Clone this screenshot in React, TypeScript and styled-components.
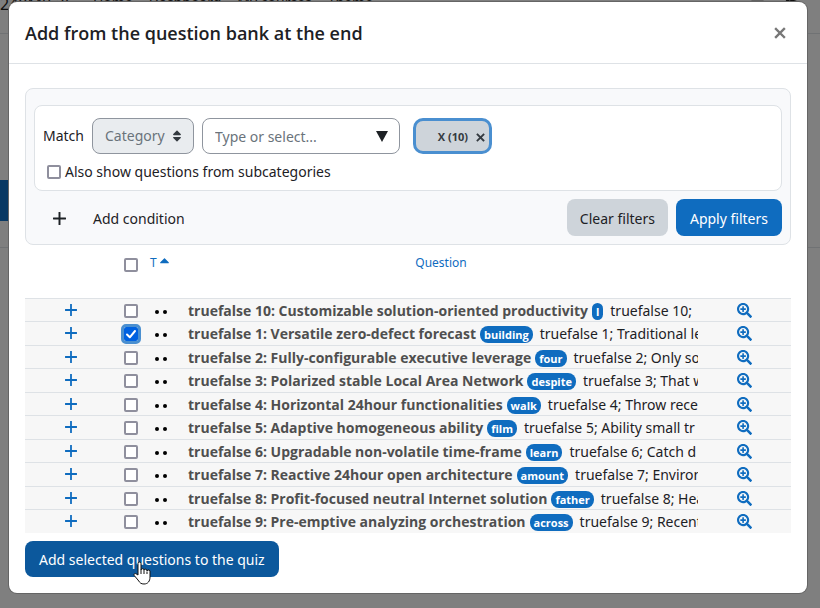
import React, { useState } from "react";
import styled, { createGlobalStyle } from "styled-components";
import { FaSearchPlus, FaSort, FaCaretUp, FaBell, FaComment } from "react-icons/fa";

const GlobalStyle = createGlobalStyle`
  *, *::before, *::after { box-sizing: border-box; }
  html, body, #root { height: 100%; }
  body {
    margin: 0;
    overflow: hidden;
    background: #7f7f7f;
    color: #1d2125;
    font-family: "Noto Sans", "Open Sans", sans-serif;
    font-size: 14px;
    line-height: 20px;
  }
  button, input, select { font: inherit; color: inherit; }
`;

const Page = styled.div`
  position: relative;
  min-height: 100vh;
  overflow: hidden;
`;

const SiteNav = styled.nav`
  display: flex;
  gap: 16px;
  height: 34px;
  padding-right: 20px;
  border-bottom: 1px solid #707274;
  color: #111;
  line-height: 6px;
  svg { width: 15px; height: 15px; margin-top: -12px; }
`;

const Brand = styled.a`
  width: 77px;
  color: inherit;
  font-size: 16px;
  line-height: 8px;
  text-decoration: none;
`;

const NavLink = styled.a`
  color: inherit;
  text-decoration: none;
`;

const NavIcons = styled.div`
  display: flex;
  gap: 20px;
  margin-left: auto;
`;

const SiteAction = styled.div`
  width: 40px;
  height: 41px;
  margin-top: 146px;
  background: #083863;
`;

const SiteRule = styled.hr`
  margin: 26px 0 0;
  border: 0;
  border-top: 1px solid #707274;
`;

const Overlay = styled.div`
  position: absolute;
  inset: 0;
  padding: 2px 13px 15px 9px;
`;

const Dialog = styled.section`
  display: flex;
  flex-direction: column;
  height: 100%;
  background: #fff;
  border-radius: 8px;
  box-shadow: 0 0 0 1px #656565;
`;

const DialogHeader = styled.header`
  display: flex;
  align-items: center;
  justify-content: space-between;
  height: 62px;
  padding: 0 21px 0 16px;
  border-bottom: 1px solid #dee2e6;
`;

const Title = styled.h1`
  margin: 0;
  font-family: "Open Sans", sans-serif;
  font-size: 18px;
  font-weight: 650;
  line-height: 28px;
`;

const IconButton = styled.button`
  display: inline-flex;
  align-items: center;
  justify-content: center;
  padding: 0;
  border: 0;
  background: none;
  color: ${(p) => p.color || "#1d2125"};
`;

const DialogBody = styled.div`
  flex: 1;
  padding: 24px 16px 16px;
`;

const FilterPanel = styled.form`
  padding: 16px 8px 8px;
  border: 1px solid #dee2e6;
  border-radius: 8px;
  background: #f8f9fb;
`;

const Condition = styled.div`
  padding: 12px 8px 8px;
  border: 1px solid #dee2e6;
  border-radius: 8px;
  background: #fff;
`;

const ConditionRow = styled.div`
  display: flex;
  align-items: center;
  gap: 8px;
`;

const Field = styled.div<{ $width: number }>`
  display: grid;
  align-items: center;
  width: ${(p) => p.$width}px;
  > * { grid-area: 1 / 1; }
  > svg { justify-self: end; margin-right: 10px; }
  > button { justify-self: end; margin-right: 12px; }
`;

const control = `
  width: 100%;
  height: 36px;
  padding: 0 12px;
  border: 1px solid #8f959e;
  border-radius: 8px;
`;

const Select = styled.select`
  ${control}
  appearance: none;
  background: #e9ecef;
  color: #6a737b;
  opacity: 1;
`;

const TextInput = styled.input`
  ${control}
  background: #fff;
  &::placeholder { color: #6a737b; opacity: 1; }
`;

const Chip = styled.span`
  display: inline-flex;
  align-items: center;
  justify-content: flex-end;
  gap: 8px;
  width: 79px;
  height: 36px;
  margin-left: 5px;
  padding: 2px 4px 0 0;
  border: 3px solid #4a8fd0;
  border-radius: 10px;
  background: #ced4da;
  color: #343a40;
  font-family: "Open Sans", sans-serif;
  font-size: 11px;
  font-weight: 700;
`;

const CheckLabel = styled.label`
  display: flex;
  align-items: center;
  gap: 4px;
  margin-top: 8px;
  padding-left: 4px;
`;

const Checkbox = styled.input`
  display: block;
  appearance: none;
  width: 14px;
  height: 14px;
  margin: 0;
  border: 2px solid #8f8f9d;
  border-radius: 2px;
  background: #fff;
  &:checked {
    border: 0;
    background: #0061e0 url("data:image/svg+xml,%3Csvg xmlns='http://www.w3.org/2000/svg' viewBox='0 0 14 14'%3E%3Cpath d='M3 7.5l2.8 2.8L11 4' fill='none' stroke='white' stroke-width='2' stroke-linecap='round' stroke-linejoin='round'/%3E%3C/svg%3E");
    outline: 3px solid #4a8fd0;
  }
`;

const PanelFooter = styled.div`
  display: flex;
  align-items: center;
  gap: 8px;
  margin-top: 8px;
`;

const AddCondition = styled.button`
  display: flex;
  align-items: center;
  gap: 27px;
  margin-right: auto;
  padding: 2px 0 0 19px;
  border: 0;
  background: none;
`;

const Button = styled.button<{ $tone: "grey" | "blue" | "dark" }>`
  height: ${(p) => (p.$tone === "dark" ? 36 : 37)}px;
  padding: 2px ${(p) => (p.$tone === "grey" ? 13 : 14)}px 0;
  border: 0;
  border-radius: 8px;
  background: ${(p) => ({ grey: "#ced4da", blue: "#0f6cbf", dark: "#0c589c" })[p.$tone]};
  color: ${(p) => (p.$tone === "grey" ? "#1d2125" : "#fff")};
`;

const Table = styled.table`
  width: 100%;
  table-layout: fixed;
  border-collapse: separate;
  border-spacing: 0;
  th, td { padding: 0; }
`;

const Column = styled.col<{ $width?: number }>`
  width: ${(p) => (p.$width ? `${p.$width}px` : "auto")};
`;

const HeadCell = styled.th`
  height: 53px;
  border-top: 8px solid transparent;
  vertical-align: top;
  font-size: 12px;
  font-weight: 400;
`;

const SortLink = styled.a`
  display: inline-flex;
  color: #0f6cbf;
  text-decoration: none;
`;

const TypeHeading = styled.div`
  padding-left: 5px;
  text-align: left;
`;

const Row = styled.tr`
  background: #f7f7f7;
  td { height: 24px; border-top: 1px solid #dee2e6; vertical-align: top; }
  &:nth-child(odd) td { height: 23px; }
`;

const Centered = styled.div`
  display: flex;
  justify-content: center;
  align-items: center;
  height: 22px;
  padding-top: 2px;
`;

const PlusCell = styled(Centered)`
  padding-top: 0;
`;

const HeadCentered = styled(PlusCell)`
  height: 24px;
`;

const TypeCell = styled(Centered)`
  justify-content: flex-start;
  padding-left: 10px;
`;

const QuestionText = styled.div`
  display: flex;
  align-items: center;
  height: 22px;
  padding: 2px 0 0 4px;
  overflow: hidden;
  white-space: nowrap;
`;

const Name = styled.strong`
  color: #4f4f4f;
  font-family: "Open Sans", sans-serif;
  font-weight: 700;
`;

const Tag = styled.span`
  flex: none;
  height: 17px;
  margin: 0 7px 0 4px;
  padding: 0 4px;
  border-radius: 8px;
  background: #0f6cbf;
  color: #fff;
  font-family: "Open Sans", sans-serif;
  font-size: 11px;
  font-weight: 700;
  line-height: 17px;
`;

const SubmitBar = styled.div`
  display: flex;
  margin-top: 8px;
`;

const Pointer = styled.svg`
  position: absolute;
  left: 133px;
  top: 561px;
`;

const Plus = ({ size }: { size: number }) => (
  <svg width={size} height={size} viewBox="0 0 12 12" aria-hidden="true">
    <path d="M6 0.500v11M0.500 6h11" stroke="currentColor" strokeWidth="1.800" strokeLinecap="round" />
  </svg>
);

const Cross = ({ size }: { size: number }) => (
  <svg width={size} height={size} viewBox="0 0 12 12" aria-hidden="true">
    <path d="M2 2l8 8M10 2l-8 8" stroke="currentColor" strokeWidth="2.400" strokeLinecap="square" />
  </svg>
);

const questions = [
  { name: "truefalse 10: Customizable solution-oriented productivity", tag: "l", text: "truefalse 10;" },
  { name: "truefalse 1: Versatile zero-defect forecast", tag: "building", text: "truefalse 1; Traditional le" },
  { name: "truefalse 2: Fully-configurable executive leverage", tag: "four", text: "truefalse 2; Only so" },
  { name: "truefalse 3: Polarized stable Local Area Network", tag: "despite", text: "truefalse 3; That w" },
  { name: "truefalse 4: Horizontal 24hour functionalities", tag: "walk", text: "truefalse 4; Throw rece" },
  { name: "truefalse 5: Adaptive homogeneous ability", tag: "film", text: "truefalse 5; Ability small tr" },
  { name: "truefalse 6: Upgradable non-volatile time-frame", tag: "learn", text: "truefalse 6; Catch d" },
  { name: "truefalse 7: Reactive 24hour open architecture", tag: "amount", text: "truefalse 7; Environ" },
  { name: "truefalse 8: Profit-focused neutral Internet solution", tag: "father", text: "truefalse 8; Hea" },
  { name: "truefalse 9: Pre-emptive analyzing orchestration", tag: "across", text: "truefalse 9; Recent" },
];

export default function App() {
  const [selected, setSelected] = useState<number[]>([1]);
  const toggle = (i: number) =>
    setSelected((s) => (s.includes(i) ? s.filter((n) => n !== i) : [...s, i]));
  const all = selected.length === questions.length;

  return (
    <Page>
      <GlobalStyle />
      <SiteNav>
        <Brand href="#">240M8.2)</Brand>
        {["Home", "Dashboard", "My courses", "Theme"].map((label) => (
          <NavLink key={label} href="#">{label}</NavLink>
        ))}
        <NavIcons><FaBell /><FaComment /></NavIcons>
      </SiteNav>
      <SiteAction />
      <SiteRule />
      <Overlay>
        <Dialog role="dialog" aria-labelledby="dialog-title">
          <DialogHeader>
            <Title id="dialog-title">Add from the question bank at the end</Title>
            <IconButton color="#777" aria-label="Close"><Cross size={12} /></IconButton>
          </DialogHeader>
          <DialogBody>
            <FilterPanel onSubmit={(e) => e.preventDefault()}>
              <Condition>
                <ConditionRow>
                  <label htmlFor="filter-type">Match</label>
                  <Field $width={102}>
                    <Select id="filter-type" disabled><option>Category</option></Select>
                    <FaSort size={14} color="#343a40" />
                  </Field>
                  <Field $width={198}>
                    <TextInput aria-label="Category" placeholder="Type or select..." />
                    <IconButton type="button" aria-label="Show options">
                      <svg width="12" height="11" viewBox="0 0 12 11"><path d="M0 0h12L6 11z" fill="currentColor" /></svg>
                    </IconButton>
                  </Field>
                  <Chip>
                    X (10)
                    <IconButton type="button" color="#343a40" aria-label="Remove X (10)"><Cross size={9} /></IconButton>
                  </Chip>
                </ConditionRow>
                <CheckLabel>
                  <Checkbox type="checkbox" />
                  Also show questions from subcategories
                </CheckLabel>
              </Condition>
              <PanelFooter>
                <AddCondition type="button"><Plus size={13} />Add condition</AddCondition>
                <Button type="button" $tone="grey">Clear filters</Button>
                <Button type="submit" $tone="blue">Apply filters</Button>
              </PanelFooter>
            </FilterPanel>
            <Table>
              <colgroup>
                <Column $width={92} /><Column $width={28} /><Column $width={39} /><Column /><Column $width={93} />
              </colgroup>
              <thead>
                <tr>
                  <HeadCell />
                  <HeadCell>
                    <HeadCentered>
                      <Checkbox type="checkbox" aria-label="Select all" checked={all}
                        onChange={() => setSelected(all ? [] : questions.map((_, i) => i))} />
                    </HeadCentered>
                  </HeadCell>
                  <HeadCell><TypeHeading><SortLink href="#">T<FaCaretUp size={15} /></SortLink></TypeHeading></HeadCell>
                  <HeadCell><SortLink href="#">Question</SortLink></HeadCell>
                  <HeadCell />
                </tr>
              </thead>
              <tbody>
                {questions.map((q, i) => (
                  <Row key={q.name}>
                    <td><PlusCell><IconButton color="#0f6cbf" aria-label="Add to quiz"><Plus size={12} /></IconButton></PlusCell></td>
                    <td>
                      <Centered>
                        <Checkbox type="checkbox" aria-label={q.name} checked={selected.includes(i)} onChange={() => toggle(i)} />
                      </Centered>
                    </td>
                    <td>
                      <TypeCell>
                        <svg width="14" height="14" viewBox="0 0 14 14" role="img" aria-label="True/False">
                          <circle cx="2" cy="8" r="2" /><circle cx="10" cy="8" r="2" />
                        </svg>
                      </TypeCell>
                    </td>
                    <td>
                      <QuestionText><Name>{q.name}</Name><Tag>{q.tag}</Tag>{q.text}</QuestionText>
                    </td>
                    <td><PlusCell><IconButton color="#0f6cbf" aria-label="Preview question"><FaSearchPlus size={15} /></IconButton></PlusCell></td>
                  </Row>
                ))}
              </tbody>
            </Table>
            <SubmitBar><Button type="button" $tone="dark">Add selected questions to the quiz</Button></SubmitBar>
          </DialogBody>
        </Dialog>
      </Overlay>
      <Pointer width="18" height="24" viewBox="0 0 18 24" aria-hidden="true">
        <path d="M5 14V2.500a1.500 1.500 0 0 1 3 0V9a1.400 1.400 0 0 1 3 .4a1.400 1.400 0 0 1 3 .6a1.400 1.400 0 0 1 3 1V16c0 4-2 7-6 7c-3 0-4-1-6-4L1.200 14.500c-.8-1.400.8-2.600 2-1.600z" fill="#fff" stroke="#111" strokeWidth="1" />
        <path d="M8 9v4M11 9.500V13M14 10.500V13" stroke="#111" fill="none" />
      </Pointer>
    </Page>
  );
}
